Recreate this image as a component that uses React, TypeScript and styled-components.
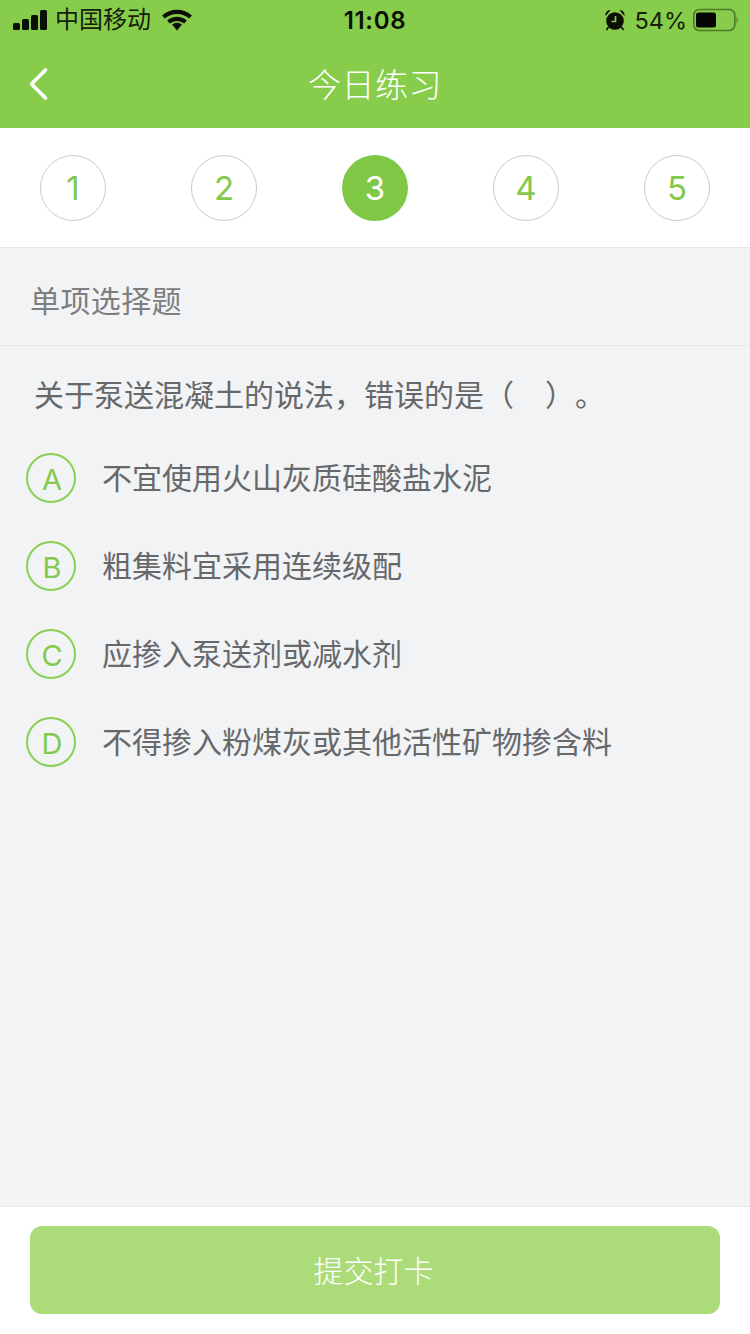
import React from 'react';
import styled, { createGlobalStyle } from 'styled-components';

const GREEN = '#87cd4b';
const FONT = `"Liberation Sans", "Noto Sans CJK SC", sans-serif`;

const Global = createGlobalStyle`
  html, body { margin: 0; padding: 0; background: #f2f3f5; }
  * { box-sizing: border-box; }
`;

const Page = styled.div`
  width: 750px;
  height: 1334px;
  display: flex;
  flex-direction: column;
  background: #f2f3f5;
  font-family: ${FONT};
  overflow: hidden;
  text-spacing-trim: space-all;
`;

const Header = styled.header`
  height: 128px;
  background: ${GREEN};
  display: flex;
  flex-direction: column;
`;

const StatusBar = styled.div`
  height: 40px;
  display: grid;
  grid-template-columns: 1fr auto 1fr;
  align-items: center;
  padding: 0 12px 0 13px;
  color: #0b0f06;
`;

const StatusLeft = styled.div`
  display: flex;
  align-items: center;
  font-size: 24px;
`;

const Carrier = styled.span`
  margin-left: 8px;
  margin-right: 11px;
  line-height: 40px;
  color: #16200c;
`;

const Time = styled.div`
  font-size: 24px;
  font-weight: 600;
  font-family: Inter, ${FONT};
  letter-spacing: 0.7px;
  margin-right: 1px;
`;

const StatusRight = styled.div`
  display: flex;
  align-items: center;
  justify-content: flex-end;
  font-size: 24px;
`;

const Percent = styled.span`
  margin-left: 9px;
  margin-right: 6px;
  color: #16200c;
  font-family: Inter, "Liberation Sans", sans-serif;
  font-weight: 400;
  font-size: 23.5px;
`;

const NavBar = styled.div`
  flex: 1;
  display: flex;
  align-items: center;
  justify-content: center;
  position: relative;
  padding-bottom: 2px;
`;

const BackButton = styled.div`
  position: absolute;
  left: 27px;
  top: 27px;
  display: flex;
`;

const Title = styled.h1`
  margin: 0;
  font-size: 33px;
  font-weight: 300;
  color: #fff;
  letter-spacing: 0.5px;
`;

const Steps = styled.nav`
  height: 120px;
  background: #fff;
  border-bottom: 1px solid #e6e7e9;
  display: flex;
  justify-content: space-between;
  padding: 27px 40px 0;
`;

const Step = styled.div<{ $active?: boolean }>`
  width: 66px;
  height: 66px;
  border-radius: 50%;
  display: flex;
  align-items: center;
  justify-content: center;
  font-family: Inter, "Liberation Sans", sans-serif;
  font-weight: 400;
  font-size: 33px;
  background: ${p => (p.$active ? '#7fc846' : '#fff')};
  color: ${p => (p.$active ? '#fff' : '#83c94c')};
  border: ${p => (p.$active ? 'none' : '1px solid #c9cbc9')};
`;

const TypeRow = styled.div`
  height: 98px;
  display: flex;
  align-items: center;
  padding: 4px 0 0 30px;
  font-size: 30px;
  letter-spacing: 0.4px;
  color: #7c7e80;
  border-bottom: 1px solid #e6e7e9;
`;

const Question = styled.div`
  padding: 27px 0 0 34px;
  height: 88px;
  font-size: 30px;
  line-height: 46px;
  color: #66686a;
  white-space: pre;
  word-spacing: 2px;
`;

const Options = styled.ul`
  flex: 1;
  list-style: none;
  margin: 0;
  padding: 0 0 0 26px;
  display: flex;
  flex-direction: column;
`;

const Option = styled.li`
  height: 88px;
  display: flex;
  align-items: center;
  gap: 26px;
  font-size: 30px;
  color: #66686a;
`;

const Letter = styled.span`
  width: 50px;
  height: 50px;
  border-radius: 50%;
  border: 2px solid #8ad052;
  color: #83c94c;
  display: flex;
  align-items: center;
  justify-content: center;
  font-size: 29px;
  font-weight: 400;
  font-family: Inter, "Liberation Sans", sans-serif;
  flex: none;
  padding: 2px 0 0 2px;
`;

const OptionText = styled.span`
  position: relative;
  top: -2px;
`;

const Footer = styled.footer`
  height: 128px;
  background: #fff;
  border-top: 1px solid #e6e7e9;
  padding: 19px 30px 20px;
`;

const SubmitButton = styled.button`
  width: 100%;
  height: 88px;
  border: none;
  border-radius: 12px;
  background: #abdc79;
  color: #fff;
  font-family: ${FONT};
  font-size: 30px;
  font-weight: 300;
  padding: 0 3px 3px 0;
`;

const Signal = () => (
  <svg width="34" height="20" viewBox="0 0 34 20" fill="#0b0f06">
    <rect x="0" y="13" width="7" height="7" rx="1.5" />
    <rect x="9" y="9" width="7" height="11" rx="1.5" />
    <rect x="18" y="5" width="7" height="15" rx="1.5" />
    <rect x="27" y="0" width="7" height="20" rx="1.5" />
  </svg>
);

const Wifi = () => (
  <svg width="30" height="22" viewBox="0 0 30 22" fill="none">
    <path d="M1.5 8C9 1.2 21 1.2 28.5 8" stroke="#0b0f06" strokeWidth="4.2" />
    <path d="M6.5 13C11.5 8.8 18.5 8.8 23.5 13" stroke="#0b0f06" strokeWidth="4.2" />
    <path d="M10 15.5C13 13.2 17 13.2 20 15.5L15 21.5Z" fill="#0b0f06" />
  </svg>
);

const Alarm = () => (
  <svg width="20" height="22" viewBox="0 0 20 22" fill="#0b0f06">
    <circle cx="10" cy="12" r="8.8" />
    <path d="M0.5 6.5C0.2 3 2.5 1 5.5 1.2L0.8 6.8Z" />
    <path d="M19.5 6.5C19.8 3 17.5 1 14.5 1.2L19.2 6.8Z" />
    <path d="M3.5 18L1.5 21M16.5 18l2 3" stroke="#0b0f06" strokeWidth="1.6" />
    <path d="M10.5 7V12.5H6.5" stroke={GREEN} strokeWidth="1.6" fill="none" />
  </svg>
);

const Battery = () => (
  <svg width="45" height="24" viewBox="0 0 45 24" fill="none">
    <rect x="0.8" y="1.5" width="41" height="21" rx="5.5" stroke="#4c7a2b" strokeWidth="1.6" />
    <rect x="3" y="4.5" width="20" height="15" rx="2.5" fill="#050505" />
    <path d="M43.5 8.5c1.5.6 1.5 6.4 0 7z" fill="#4c7a2b" />
  </svg>
);

const Back = () => (
  <svg width="24" height="34" viewBox="0 0 24 34" fill="none">
    <path d="M18.5 3L4.5 17L18.5 31" stroke="#fff" strokeWidth="3.6" strokeLinecap="round" strokeLinejoin="round" />
  </svg>
);

const steps = [1, 2, 3, 4, 5];
const options = [
  ['A', '不宜使用火山灰质硅酸盐水泥'],
  ['B', '粗集料宜采用连续级配'],
  ['C', '应掺入泵送剂或减水剂'],
  ['D', '不得掺入粉煤灰或其他活性矿物掺含料'],
];

export default function App() {
  return (
    <Page>
      <Global />
      <Header>
        <StatusBar>
          <StatusLeft>
            <Signal />
            <Carrier>中国移动</Carrier>
            <Wifi />
          </StatusLeft>
          <Time>11:08</Time>
          <StatusRight>
            <Alarm />
            <Percent>54%</Percent>
            <Battery />
          </StatusRight>
        </StatusBar>
        <NavBar>
          <BackButton>
            <Back />
          </BackButton>
          <Title>今日练习</Title>
        </NavBar>
      </Header>
      <Steps>
        {steps.map(n => (
          <Step key={n} $active={n === 3}>{n}</Step>
        ))}
      </Steps>
      <TypeRow>单项选择题</TypeRow>
      <Question>关于泵送混凝土的说法，错误的是（   ）。</Question>
      <Options>
        {options.map(([letter, text]) => (
          <Option key={letter}>
            <Letter>{letter}</Letter>
            <OptionText>{text}</OptionText>
          </Option>
        ))}
      </Options>
      <Footer>
        <SubmitButton>提交打卡</SubmitButton>
      </Footer>
    </Page>
  );
}
